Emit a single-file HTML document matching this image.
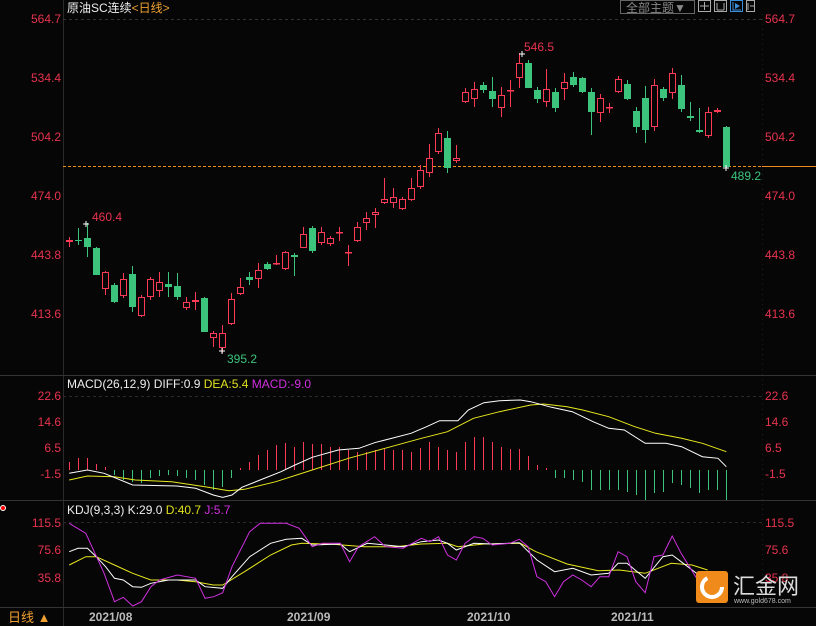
<!DOCTYPE html>
<html><head><meta charset="utf-8"><style>
body{margin:0;background:#000;width:816px;height:626px;overflow:hidden;font-family:"Liberation Sans","Noto Sans CJK SC",sans-serif}
svg{display:block}
</style></head><body>
<svg id="s" width="816" height="626" xmlns="http://www.w3.org/2000/svg" font-family="Liberation Sans, Noto Sans CJK SC, sans-serif">
<rect width="816" height="626" fill="#060606"/>
<line x1="63.5" y1="0" x2="63.5" y2="626" stroke="#2a2a2a"/>
<line x1="762.5" y1="14" x2="762.5" y2="607" stroke="#1e1e1e" stroke-dasharray="1,4"/>
<line x1="63" y1="19.5" x2="762" y2="19.5" stroke="#333" stroke-dasharray="3,3"/>
<line x1="0" y1="375.5" x2="816" y2="375.5" stroke="#333"/>
<line x1="0" y1="500.5" x2="816" y2="500.5" stroke="#333"/>
<line x1="0" y1="607.5" x2="816" y2="607.5" stroke="#333"/>
<line x1="63" y1="396.5" x2="762" y2="396.5" stroke="#2a2a2a" stroke-dasharray="3,3"/>
<line x1="63" y1="522.5" x2="762" y2="522.5" stroke="#2a2a2a" stroke-dasharray="3,3"/>
<line x1="63" y1="166.5" x2="762" y2="166.5" stroke="#f08c1e" stroke-dasharray="3,2"/>
<line x1="762" y1="166.5" x2="816" y2="166.5" stroke="#f08c1e"/>
<g id="cd"></g><g id="mc"></g><g id="kd"></g>
<g font-size="12" fill="#e8334e" text-anchor="end">
<text x="61" y="23">564.7</text><text x="61" y="82">534.4</text><text x="61" y="141">504.2</text><text x="61" y="200">474.0</text><text x="61" y="259">443.8</text><text x="61" y="318">413.6</text>
<text x="61" y="400">22.6</text><text x="61" y="426">14.6</text><text x="61" y="452">6.5</text><text x="61" y="478">-1.5</text>
<text x="61" y="527">115.5</text><text x="61" y="554">75.6</text><text x="61" y="582">35.8</text>
</g>
<g font-size="12" fill="#e8334e">
<text x="765" y="23">564.7</text><text x="765" y="82">534.4</text><text x="765" y="141">504.2</text><text x="765" y="200">474.0</text><text x="765" y="259">443.8</text><text x="765" y="318">413.6</text>
<text x="765" y="400">22.6</text><text x="765" y="426">14.6</text><text x="765" y="452">6.5</text><text x="765" y="478">-1.5</text>
<text x="765" y="527">115.5</text><text x="765" y="554">75.6</text><text x="765" y="582">35.8</text>
<text x="92" y="221">460.4</text><text x="524" y="51">546.5</text>
</g>
<text x="227" y="363" font-size="12" fill="#3cc47c">395.2</text>
<text x="731" y="180" font-size="12" fill="#3cc47c">489.2</text>
<g stroke="#fff" stroke-width="1"><path d="M83 224h6M86 221v6M519 54h6M522 51v6M219 351h6M222 348v6M723 168h6M726 165v6"/></g>
<text x="67" y="12" font-size="12" fill="#eee">原油SC连续<tspan fill="#f0a030">&lt;日线&gt;</tspan></text>
<text x="67" y="388" font-size="12" fill="#eee">MACD(26,12,9) DIFF:0.9 <tspan fill="#e0e020">DEA:5.4</tspan> <tspan fill="#d030e0">MACD:-9.0</tspan></text>
<text x="67" y="514" font-size="12" fill="#eee">KDJ(9,3,3) K:29.0 <tspan fill="#e0e020">D:40.7</tspan> <tspan fill="#d030e0">J:5.7</tspan></text>
<circle cx="3" cy="508" r="2.5" fill="#f00" stroke="#fff" stroke-width="1"/>
<rect x="620.5" y="0.5" width="74" height="13" fill="none" stroke="#666"/>
<text x="626" y="12" font-size="12" fill="#888">全部主题▼</text>
<g fill="none" stroke="#aaa"><rect x="698.5" y="0.5" width="12" height="11"/><rect x="714.5" y="0.5" width="12" height="11"/><rect x="730.5" y="0.5" width="12" height="11" stroke="#3a8fd8"/><rect x="746.5" y="0.5" width="8" height="11"/>
<path d="M704.5 2v8M700 6h9M717 3v7M724 3v7M717 10h7"/><path d="M733 2v8h8" stroke="#3a8fd8"/><path d="M748 3v7M750 6h4"/></g>
<path d="M735 3l5 3-5 3z" fill="#3a8fd8"/>
<g font-size="12" fill="#bbb" font-weight="bold"><text x="89" y="621">2021/08</text><text x="287" y="621">2021/09</text><text x="467" y="621">2021/10</text><text x="611" y="621">2021/11</text></g>
<text x="8" y="622" font-size="13" fill="#f0a030">日线 ▲</text>
<rect x="696" y="571" width="32" height="32" rx="3" fill="#f08a1a"/>
<circle cx="712" cy="587" r="10" fill="none" stroke="#fff" stroke-width="4" stroke-dasharray="42,22"/>
<text x="733" y="594" font-size="22" fill="#ddd">汇金网</text>
<text x="734" y="603" font-size="7" fill="#bbb">www.gold678.com</text>
</svg>
<script>
var ns="http://www.w3.org/2000/svg";function el(p,t,a){var e=document.createElementNS(ns,t);for(var k in a)e.setAttribute(k,a[k]);p.appendChild(e);return e}
var R="#ff3a55",G="#3cc47c";
// [color, bodyTop, bodyBot, wickTop, wickBot]
var c=[[R,240,242,237,247],[G,240,241,228,245],[G,238,247,223,257],[G,248,275,247,275],[R,272,289,271,295],[G,285,302,283,303],[R,279,296,273,298],[G,274,307,266,312],[R,297,316,295,317],[R,279,297,277,300],[R,282,291,272,297],[G,284,287,272,297],[G,286,297,273,300],[R,302,308,297,310],[R,300,302,292,310],[G,298,332,297,332],[R,333,338,331,347],[R,333,348,325,353],[R,299,324,293,325],[R,287,294,278,295],[G,277,280,272,285],[R,270,279,263,288],[G,264,269,262,270],[R,263,264,255,265],[R,252,269,251,270],[G,255,257,253,276],[R,234,248,227,248],[G,228,251,226,253],[R,232,243,227,245],[R,238,244,236,246],[R,232,233,227,241],[R,252,253,245,266],[R,227,241,222,242],[R,218,223,212,230],[R,212,215,208,228],[R,199,203,178,204],[R,197,203,188,208],[R,199,209,197,210],[R,188,200,178,201],[R,170,187,165,189],[R,158,173,144,177],[R,133,152,128,154],[G,138,168,131,173],[R,158,161,145,163],[R,92,102,88,103],[R,89,99,82,107],[G,85,90,82,93],[G,91,99,77,107],[R,95,108,87,117],[R,90,91,80,107],[R,63,78,53,88],[G,63,88,60,88],[G,90,99,87,103],[R,89,102,69,107],[G,92,108,88,112],[R,82,89,73,100],[G,77,85,72,87],[G,78,92,77,93],[G,92,112,88,135],[R,98,113,94,122],[R,107,108,103,113],[R,79,92,76,93],[G,84,99,80,100],[G,111,127,107,133],[G,98,130,86,143],[R,85,127,79,131],[G,89,98,87,101],[R,73,93,68,99],[G,85,109,75,112],[G,116,118,102,121],[G,130,132,108,133],[R,112,136,107,138],[R,110,112,108,113],[G,127,167,126,168]];
var cd=document.getElementById("cd");
c.forEach(function(d,i){var x=Math.round(69+9*i);el(cd,"line",{x1:x+.5,x2:x+.5,y1:d[3],y2:d[4],stroke:d[0]});
var h=Math.max(1,d[2]-d[1]);if(d[0]==G)el(cd,"rect",{x:x-3,y:d[1],width:7,height:h,fill:G});else el(cd,"rect",{x:x-2.5,y:d[1]+.5,width:6,height:Math.max(0.5,h-1),fill:"#060606",stroke:R});});
var mb=[462,458,458,464,467,475,480,482,483,478,476,475,476,478,480,485,490,487,478,468,462,455,450,445,443,447,442,444,444,447,447,450,452,452,450,448,450,450,452,448,442,447,450,452,442,437,437,442,447,449,449,456,465,468,478,478,480,482,490,490,490,490,492,495,500,493,492,483,485,488,493,490,490,500];
var mc=document.getElementById("mc");
mb.forEach(function(y,i){var x=Math.round(69+9*i)+.5;el(mc,"line",{x1:x,x2:x,y1:470,y2:y,stroke:y<470?R:G});});
function pl(g,pts,col,zx){var s=pts.map(function(p){return (p[0]/1.922).toFixed(1)+","+(400+p[1]/3).toFixed(1)}).join(" ");el(g,"polyline",{points:s,fill:"none",stroke:col,"stroke-width":1});}
var DIFF=[[133,220],[168,210],[200,220],[255,255],[340,258],[376,265],[410,285],[428,292],[446,285],[465,262],[500,240],[540,215],[567,195],[600,172],[650,150],[690,145],[720,128],[790,100],[820,80],[845,62],[880,62],[900,30],[930,8],[960,2],[1000,0],[1020,5],[1060,22],[1100,35],[1140,65],[1170,85],[1200,90],[1240,130],[1280,130],[1310,140],[1350,170],[1380,175],[1396,200]];
var DEA=[[133,240],[168,228],[220,230],[260,240],[330,245],[394,260],[440,272],[470,268],[530,245],[600,210],[670,175],[740,145],[810,115],[860,95],[910,55],[960,35],[1020,15],[1045,12],[1090,20],[1120,30],[1170,50],[1220,80],[1260,100],[1310,115],[1350,130],[1396,155]];
pl(mc,DEA,"#e8e820");pl(mc,DIFF,"#fff");
var kd=document.getElementById("kd");
var J=[[133,370],[165,400],[200,520],[220,605],[237,592],[255,618],[272,605],[290,560],[307,540],[341,525],[376,535],[394,595],[411,590],[428,578],[446,500],[480,395],[500,370],[550,370],[575,385],[600,440],[620,430],[654,430],[672,485],[689,440],[720,410],[741,440],[775,445],[810,415],[826,425],[843,410],[860,465],[877,480],[894,430],[911,410],[928,415],[946,435],[980,430],[998,418],[1015,440],[1032,530],[1049,545],[1066,590],[1083,545],[1101,525],[1118,540],[1136,560],[1153,530],[1170,530],[1188,455],[1205,470],[1222,545],[1240,578],[1257,470],[1274,465],[1292,408],[1309,460],[1343,545]];
var K=[[133,455],[150,445],[168,445],[185,470],[203,500],[220,535],[237,540],[255,560],[272,562],[290,550],[324,540],[376,540],[394,560],[428,565],[446,530],[480,470],[520,430],[550,418],[580,415],[600,435],[654,432],[672,455],[706,430],[741,435],[775,440],[810,425],[843,420],[860,430],[877,450],[911,430],[946,432],[998,428],[1032,480],[1066,515],[1101,505],[1136,525],[1170,520],[1188,490],[1205,490],[1240,535],[1274,470],[1292,465],[1309,485],[1343,525]];
var D=[[133,495],[165,470],[185,470],[220,495],[255,520],[290,540],[340,540],[376,545],[410,555],[428,555],[470,515],[520,465],[560,435],[580,430],[640,433],[700,440],[760,440],[810,432],[860,430],[880,440],[930,432],[1000,430],[1030,455],[1090,492],[1150,512],[1190,510],[1240,520],[1290,490],[1330,495],[1360,510]];
pl(kd,D,"#e8e820");pl(kd,K,"#fff");pl(kd,J,"#d030e0");
</script>
</body></html>
